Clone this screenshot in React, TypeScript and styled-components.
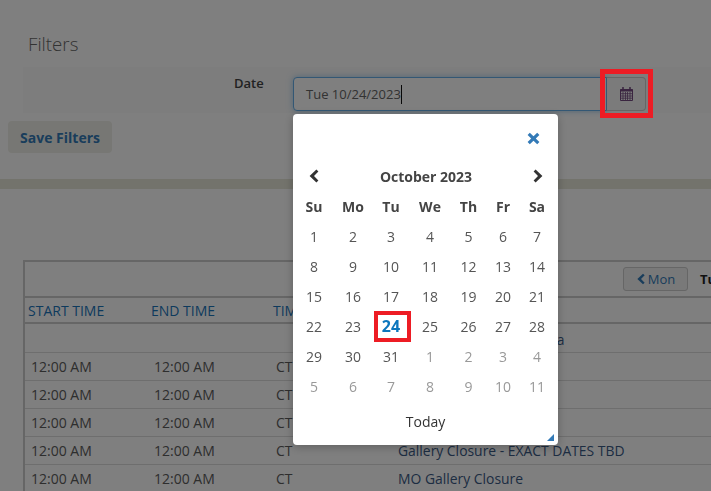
import styled, { createGlobalStyle } from "styled-components"

const GlobalStyle = createGlobalStyle`
  html, body {
    margin: 0;
    height: 100%;
    overflow: hidden;
    background: #fff;
  }
  body {
    font-family: "Open Sans", "Liberation Sans", sans-serif;
    font-size: 14px;
    color: #444;
  }
  * {
    box-sizing: border-box;
  }
`

const weekDays = ["Su", "Mo", "Tu", "We", "Th", "Fr", "Sa"]

const calendarDays = [
  ...Array.from({ length: 31 }, (_, i) => ({ day: i + 1, muted: false })),
  ...Array.from({ length: 11 }, (_, i) => ({ day: i + 1, muted: true })),
]

const events = [
  { start: "", end: "", zone: "", name: "Gallery Closure - Alabama", tall: true },
  { start: "12:00 AM", end: "12:00 AM", zone: "CT", name: "" },
  { start: "12:00 AM", end: "12:00 AM", zone: "CT", name: "" },
  { start: "12:00 AM", end: "12:00 AM", zone: "CT", name: "" },
  { start: "12:00 AM", end: "12:00 AM", zone: "CT", name: "Gallery Closure - EXACT DATES TBD" },
  { start: "12:00 AM", end: "12:00 AM", zone: "CT", name: "MO Gallery Closure" },
]

const CalendarIcon = () => (
  <svg width="13" height="14" viewBox="0 0 13 14" fill="none">
    <path d="M0.5 2.5h12v11h-12z" stroke="#744a80" strokeWidth="1" />
    <path d="M0.5 2h12v2.5h-12z" fill="#744a80" />
    <path
      d="M3 5v8M5.5 5v8M7.5 5v8M10 5v8M1 6.7h11M1 9h11M1 11.2h11"
      stroke="#744a80"
      strokeWidth="0.8"
    />
    <path d="M3 0.6v3M10 0.6v3" stroke="#744a80" strokeWidth="1.6" strokeLinecap="round" />
  </svg>
)

const Chevron = ({ right = false, width = 12, height = 14, color = "#333" }: { right?: boolean; width?: number; height?: number; color?: string }) => (
  <svg width={width} height={height} viewBox="0 0 12 14">
    <path
      d={right ? "M3.6 0.6 10.4 7 3.6 13.4 1.6 11.4 6 7 1.6 2.6z" : "M8.4 0.6 1.6 7 8.4 13.4 10.4 11.4 6 7 10.4 2.6z"}
      fill={color}
    />
  </svg>
)

const CloseIcon = () => (
  <svg width="13" height="13" viewBox="0 0 13 13">
    <path
      d="M2.8 0.8 6.5 4.3 10.2 0.8 12.4 3 8.8 6.5 12.4 10 10.2 12.2 6.5 8.7 2.8 12.2 0.6 10 4.2 6.5 0.6 3z"
      fill="#337ab7"
    />
  </svg>
)

export default function App() {
  return (
    <>
      <GlobalStyle />
      <Page>
        <Heading>Filters</Heading>
        <FilterBand>
          <DateLabel>Date</DateLabel>
          <DateInput>
            Tue 10/24/2023
            <Caret />
          </DateInput>
          <CalendarButton>
            <CalendarIcon />
          </CalendarButton>
        </FilterBand>
        <SaveButton>Save Filters</SaveButton>
        <Divider />

        <Schedule>
          <NavRow>
            <NavButton>
              <Chevron width={10} height={12} color="#337ab7" />
              Mon
            </NavButton>
            <CurrentDay>Tue 10/24/2023</CurrentDay>
          </NavRow>
          <HeadRow>
            <span>START TIME</span>
            <span>END TIME</span>
            <span>TIME ZONE</span>
            <span>EVENT</span>
          </HeadRow>
          {events.map((event, index) => (
            <EventRow key={index} $tall={event.tall}>
              <TimeCell>{event.start}</TimeCell>
              <TimeCell>{event.end}</TimeCell>
              <TimeCell>{event.zone}</TimeCell>
              <EventName>{event.name}</EventName>
            </EventRow>
          ))}
        </Schedule>
      </Page>

      <Overlay />

      <Highlight $left={600} $top={69} $width={53} $height={49} $border={5} />

      <Popup>
        <CloseRow>
          <CloseIcon />
        </CloseRow>
        <MonthRow>
          <Chevron />
          <MonthTitle>October 2023</MonthTitle>
          <Chevron right />
        </MonthRow>
        <DayGrid>
          {weekDays.map((day) => (
            <WeekDay key={day}>{day}</WeekDay>
          ))}
          {calendarDays.map(({ day, muted }, index) => (
            <DayCell key={index} $muted={muted} $selected={!muted && day === 24}>
              {day}
            </DayCell>
          ))}
        </DayGrid>
        <TodayLink>Today</TodayLink>
        <ResizeHandle />
      </Popup>

      <Highlight $left={374} $top={311} $width={37} $height={31} $border={4} />
    </>
  )
}

const Page = styled.main`
  width: 711px;
  height: 491px;
  padding-top: 31px;
  overflow: hidden;
`

const Heading = styled.h2`
  margin: 0 0 0 28px;
  height: 36px;
  font-size: 18.7px;
  line-height: 26px;
  font-weight: 300;
  color: #666;
`

const FilterBand = styled.div`
  display: flex;
  align-items: flex-start;
  height: 46px;
  margin-left: 23px;
  padding-top: 10px;
  background: #fafafa;
`

const DateLabel = styled.label`
  width: 270px;
  padding-left: 211px;
  margin-top: -1px;
  font-size: 13px;
  line-height: 14px;
  font-weight: 600;
  color: #444;
  white-space: nowrap;
`

const DateInput = styled.div`
  display: flex;
  align-items: center;
  width: 314px;
  height: 34px;
  padding-left: 12px;
  border: 1px solid #66afe9;
  border-radius: 4px 0 0 4px;
  background: #fff;
  box-shadow: 0 0 6px rgba(102, 175, 233, 0.6);
  font-size: 13px;
  color: #666;
`

const Caret = styled.span`
  width: 1px;
  height: 19px;
  background: #111;
`

const CalendarButton = styled.div`
  display: flex;
  align-items: center;
  justify-content: center;
  width: 39px;
  height: 34px;
  border: 1px solid #ccc;
  border-left: 0;
  border-radius: 0 4px 4px 0;
  background: #f7f7f7;
`

const SaveButton = styled.button`
  display: block;
  width: 104px;
  height: 32px;
  margin: 8px 0 0 8px;
  padding: 0;
  border: 0;
  border-radius: 4px;
  background: #efefe8;
  font-family: inherit;
  font-size: 14px;
  font-weight: 700;
  color: #337ab7;
`

const Divider = styled.div`
  height: 10px;
  margin-top: 26px;
  background: #e6e6d8;
`

const Schedule = styled.section`
  width: 760px;
  margin: 71px 0 0 23px;
  border-left: 2px solid #ccc;
  border-top: 2px solid #ccc;
`

const NavRow = styled.div`
  display: flex;
  align-items: center;
  height: 34px;
  padding-left: 598px;
  gap: 12px;
`

const NavButton = styled.div`
  display: flex;
  flex-shrink: 0;
  align-items: center;
  justify-content: center;
  gap: 2px;
  width: 65px;
  height: 24px;
  border: 1px solid #ccc;
  border-radius: 3px;
  background: #f2f2f2;
  font-size: 13px;
  color: #337ab7;
`

const CurrentDay = styled.strong`
  font-size: 13px;
  color: #222;
  white-space: nowrap;
`

const HeadRow = styled.div`
  display: grid;
  grid-template-columns: 123px 122px 125px 1fr;
  align-items: center;
  height: 28px;
  padding-left: 3px;
  border-top: 2px solid #ccc;
  border-bottom: 2px solid #ccc;
  font-size: 14px;
  color: #1b75bb;
`

const EventRow = styled.div<{ $tall?: boolean }>`
  display: grid;
  grid-template-columns: 123px 122px 122px 1fr;
  align-items: center;
  height: ${({ $tall }) => ($tall ? 29 : 28)}px;
  padding-left: 6px;
  padding-top: ${({ $tall }) => ($tall ? 3 : 0)}px;
  border-bottom: 1px solid #ddd;
  color: #5c5c5c;
`

const TimeCell = styled.span`
  white-space: nowrap;
`

const EventName = styled.span`
  color: #3a5a85;
  white-space: nowrap;
  font-size: 13.9px;
`

const Overlay = styled.div`
  position: fixed;
  inset: 0;
  background: rgba(0, 0, 0, 0.5);
`

const Highlight = styled.div<{ $left: number; $top: number; $width: number; $height: number; $border: number }>`
  position: fixed;
  left: ${({ $left }) => $left}px;
  top: ${({ $top }) => $top}px;
  width: ${({ $width }) => $width}px;
  height: ${({ $height }) => $height}px;
  border: ${({ $border }) => $border}px solid #ed1c24;
`

const Popup = styled.div`
  position: fixed;
  left: 293px;
  top: 114px;
  width: 265px;
  height: 331px;
  padding: 0 2px;
  border-radius: 4px;
  background: #fff;
  box-shadow: 0 2px 10px rgba(0, 0, 0, 0.25);
`

const CloseRow = styled.div`
  display: flex;
  justify-content: flex-end;
  padding: 18px 16px 0 0;
  height: 50px;
`

const MonthRow = styled.div`
  display: flex;
  align-items: center;
  justify-content: space-between;
  height: 26px;
  padding: 0 12px 2px 13px;
`

const MonthTitle = styled.span`
  font-size: 14px;
  font-weight: 700;
  color: #444;
`

const DayGrid = styled.div`
  display: grid;
  grid-template-columns: 38px 40px 36px 42px 35px 34px 34px;
  grid-auto-rows: 30px;
  margin-top: 1px;
`

const WeekDay = styled.div`
  display: flex;
  align-items: center;
  justify-content: center;
  font-size: 14px;
  font-weight: 700;
  color: #444;
`

const DayCell = styled.div<{ $muted: boolean; $selected: boolean }>`
  display: flex;
  align-items: center;
  justify-content: center;
  font-size: ${({ $selected }) => ($selected ? 16 : 14)}px;
  font-weight: ${({ $selected }) => ($selected ? 700 : 400)};
  color: ${({ $selected, $muted }) => ($selected ? "#0c76bd" : $muted ? "#999" : "#555")};
`

const TodayLink = styled.div`
  margin-top: 11px;
  text-align: center;
  font-size: 14px;
  line-height: 20px;
  color: #333;
`

const ResizeHandle = styled.div`
  position: absolute;
  right: 4px;
  bottom: 4px;
  width: 0;
  height: 0;
  border-left: 7px solid transparent;
  border-bottom: 7px solid #337ab7;
`
